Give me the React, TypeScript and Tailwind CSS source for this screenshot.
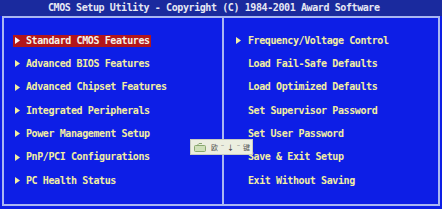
import React from 'react'

const left = [
  'Standard CMOS Features',
  'Advanced BIOS Features',
  'Advanced Chipset Features',
  'Integrated Peripherals',
  'Power Management Setup',
  'PnP/PCI Configurations',
  'PC Health Status',
]

const right: { label: string; sub: boolean }[] = [
  { label: 'Frequency/Voltage Control', sub: true },
  { label: 'Load Fail-Safe Defaults', sub: false },
  { label: 'Load Optimized Defaults', sub: false },
  { label: 'Set Supervisor Password', sub: false },
  { label: 'Set User Password', sub: false },
  { label: 'Save & Exit Setup', sub: false },
  { label: 'Exit Without Saving', sub: false },
]

function Arrow({ className = '' }: { className?: string }) {
  return (
    <svg width="5" height="7" viewBox="0 0 5 7" className={className}>
      <path d="M0 0 L5 3.5 L0 7 Z" fill="currentColor" />
    </svg>
  )
}

const mono = "font-['DejaVu_Sans_Mono','Liberation_Mono',monospace] font-bold text-[10px] tracking-[-0.4px] leading-none"

export default function App() {
  return (
    <div className={`relative w-[442px] h-[209px] overflow-hidden bg-[#0d1ee6] ${mono}`}>
      <div className="h-[16px] bg-[#1a2a9e] flex items-center pl-[48px] text-[#e6e8f4]">
        CMOS Setup Utility - Copyright (C) 1984-2001 Award Software
      </div>
      <div className="ml-[2px] w-[438px] h-[190px] border-2 border-[#a9b6f2] flex">
        <div className="w-[220px] border-r-2 border-[#a9b6f2] pt-[11px] flex flex-col">
          {left.map((l, i) => (
            <div key={l} className="h-[23.33px] flex items-center pl-[9px]">
              <div
                className={`h-[12px] flex items-center pl-[2px] pr-[1px] ${
                  i === 0 ? 'bg-[#b2161c] text-[#f4f2e8]' : 'text-[#f2eea2]'
                }`}
              >
                <Arrow className={i === 0 ? 'text-[#f6f6f6]' : 'text-[#f2eea2]'} />
                <span className="ml-[6px]">{l}</span>
              </div>
            </div>
          ))}
        </div>
        <div className="flex-1 pt-[11px] flex flex-col">
          {right.map(r => (
            <div key={r.label} className="h-[23.33px] flex items-center pl-[12px] text-[#f2eea2]">
              <span className="w-[5px]">{r.sub && <Arrow />}</span>
              <span className="ml-[7px]">{r.label}</span>
            </div>
          ))}
        </div>
      </div>
      <div className="absolute left-[190px] top-[139px] h-[16px] bg-[#eceee0] border border-[#c8ccc0] flex items-center pl-[3px] pr-[2px] whitespace-nowrap font-['Noto_Sans_CJK_SC',sans-serif] font-normal text-[7px] tracking-normal text-[#555]">
        <svg width="12" height="9" viewBox="0 0 12 9" className="shrink-0">
          <rect x="0.5" y="2.5" width="11" height="6" rx="1" fill="#cfe0b8" stroke="#8aa870" />
          <path d="M3 2.5 L5 0.5 L8 0.5" stroke="#8aa870" fill="none" />
        </svg>
        <span className="ml-[5px] flex items-center gap-[1px]">
          <span>欧</span>
          <span>ˉ</span>
          <span className="text-[#222]">↓</span>
          <span>ˉ</span>
          <span>键</span>
        </span>
      </div>
    </div>
  )
}
